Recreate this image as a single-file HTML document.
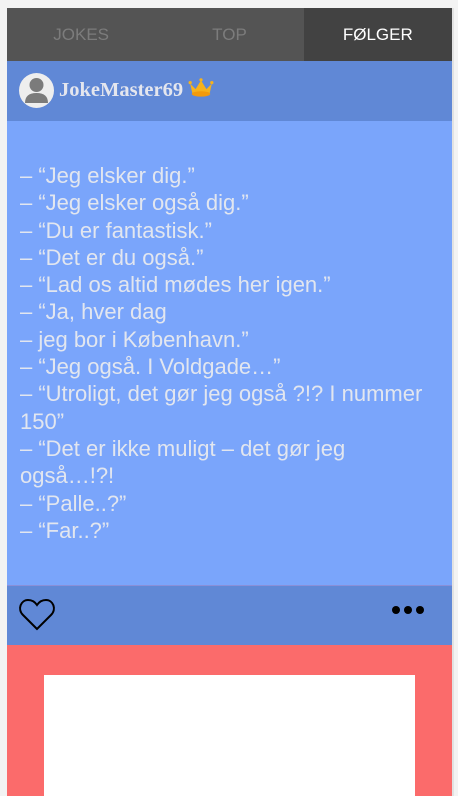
<!DOCTYPE html>
<html><head><meta charset="utf-8"><style>
html,body{margin:0;padding:0;background:#f3f3f3;width:458px;height:796px;overflow:hidden;font-family:"Liberation Sans",sans-serif}
.wrap{position:absolute;left:7px;top:8px;width:445px;height:788px;background:#fb6b6b}
.tabs{height:53px;display:flex;background:#545454}
.tabs div{flex:1;text-align:center;line-height:53px;font-size:17px;color:#7c7c7c}
.tabs div.act{background:#424242;color:#fff}
.hdr{height:60px;background:#6088d6;position:relative}
.av{position:absolute;left:12px;top:12px;width:35px;height:35px;border-radius:50%;background:#eee;overflow:hidden}
.name{position:absolute;left:52px;top:17px;font-family:"Liberation Serif",serif;font-weight:bold;font-size:20.5px;color:#e4e6ee}
.body{height:464px;background:#7aa5fb;padding:41px 13px 0;box-sizing:border-box;color:#e2e6ef;font-size:22px;line-height:27.3px}
.foot{height:60px;background:#6088d6;position:relative;border-top:1px solid #8a8fd8;box-sizing:border-box}
.white{position:absolute;left:44px;top:675px;width:371px;height:121px;background:#fff}
.sb{position:absolute;left:452px;top:8px;width:2px;height:788px;background:#e2e2e2}
</style></head><body>
<div class="wrap">
<div class="tabs"><div>JOKES</div><div>TOP</div><div class="act">FØLGER</div></div>
<div class="hdr">
<div class="av"><svg width="35" height="35" viewBox="0 0 35 35"><circle cx="17.5" cy="12" r="7" fill="#7b7b7b"/><path d="M6 30 Q6 20 17.5 20 Q29 20 29 30 Z" fill="#7b7b7b"/></svg></div>
<div class="name">JokeMaster69 <svg width="26" height="20" viewBox="0 0 24 18" style="vertical-align:-2px"><path d="M2 5 L7 10 L12 2 L17 10 L22 5 L20 14 L4 14 Z" fill="#f7b21b"/><ellipse cx="12" cy="14.5" rx="8.5" ry="2.5" fill="#f39a0c"/><circle cx="2" cy="4" r="1.5" fill="#f7b21b"/><circle cx="12" cy="1.5" r="1.5" fill="#f7b21b"/><circle cx="22" cy="4" r="1.5" fill="#f7b21b"/></svg></div>
</div>
<div class="body">– “Jeg elsker dig.”<br>– “Jeg elsker også dig.”<br>– “Du er fantastisk.”<br>– “Det er du også.”<br>– “Lad os altid mødes her igen.”<br>– “Ja, hver dag<br>– jeg bor i København.”<br>– “Jeg også. I Voldgade…”<br>– “Utroligt, det gør jeg også ?!? I nummer 150”<br>– “Det er ikke muligt – det gør jeg også…!?!<br>– “Palle..?”<br>– “Far..?”</div>
<div class="foot">
<svg style="position:absolute;left:11px;top:12px" width="38" height="34" viewBox="0 0 38 34"><path d="M19 31 L5 17 C-1 11 3 2 10 2 C14 2 17 4 19 7 C21 4 24 2 28 2 C35 2 39 11 33 17 Z" fill="none" stroke="#000" stroke-width="2"/></svg>
<svg style="position:absolute;left:384px;top:18px" width="34" height="12" viewBox="0 0 34 12"><circle cx="5" cy="6" r="4" fill="#000"/><circle cx="17" cy="6" r="4" fill="#000"/><circle cx="29" cy="6" r="4" fill="#000"/></svg>
</div>
</div>
<div class="white"></div>
<div class="sb"></div>
</body></html>
